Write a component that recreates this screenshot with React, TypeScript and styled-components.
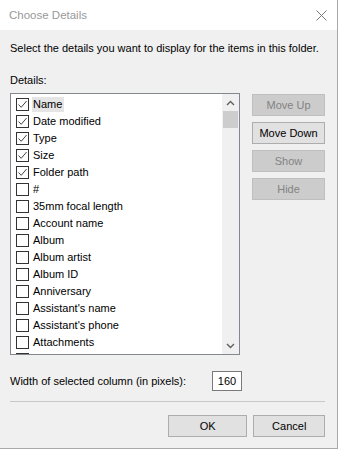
import React from 'react'
import styled, { createGlobalStyle } from 'styled-components'

const GlobalStyle = createGlobalStyle`
  html, body {
    margin: 0;
    padding: 0;
    background: #ffffff;
  }
  body {
    font-family: "Liberation Sans", Arial, sans-serif;
    font-size: 11px;
    color: #000;
  }
`

const Dialog = styled.div`
  width: 337px;
  height: 448px;
  border-right: 1px solid #a8a8a8;
  border-bottom: 1px solid #a8a8a8;
  background: #f0f0f0;
  display: flex;
  flex-direction: column;
`

const TitleBar = styled.div`
  height: 30px;
  background: #ffffff;
  display: flex;
  align-items: center;
  justify-content: space-between;
  padding: 0 10px 0 9px;
  font-size: 11.5px;
  color: #999999;
`

const Body = styled.div`
  flex: 1;
  display: flex;
  flex-direction: column;
  padding: 11px 12px 0 10px;
`

const Text = styled.div`
  line-height: 15px;
  white-space: nowrap;
`

const Intro = styled(Text)`
  margin-bottom: 17px;
`

const Caption = styled(Text)`
  margin-bottom: 5px;
`

const MainRow = styled.div`
  display: flex;
  gap: 12px;
  align-items: flex-start;
`

const ListBox = styled.div`
  width: 230px;
  height: 260px;
  border: 1px solid #828790;
  background: #ffffff;
  display: flex;
  overflow: hidden;
`

const Items = styled.div`
  flex: 1;
  display: flex;
  flex-direction: column;
  padding-top: 2px;
`

const Item = styled.div`
  height: 17px;
  display: flex;
  align-items: center;
  padding-left: 5px;
  flex-shrink: 0;
`

const Box = styled.div`
  width: 11px;
  height: 11px;
  border: 1px solid #333333;
  background: #ffffff;
  display: flex;
  align-items: center;
  justify-content: center;
  margin-right: 3px;
  flex-shrink: 0;
`

const Label = styled.span<{ $selected?: boolean }>`
  padding: 0 2px 0 1px;
  line-height: 15px;
  white-space: nowrap;
  background: ${({ $selected }) => ($selected ? '#e5e5e5' : 'transparent')};
`

const ScrollBar = styled.div`
  width: 17px;
  background: #f0f0f0;
  display: flex;
  flex-direction: column;
  align-items: center;
`

const Arrow = styled.div`
  height: 17px;
  width: 17px;
  display: flex;
  align-items: center;
  justify-content: center;
`

const Thumb = styled.div`
  width: 15px;
  height: 17px;
  background: #cdcdcd;
`

const Spacer = styled.div`
  flex: 1;
`

const ButtonColumn = styled.div`
  display: flex;
  flex-direction: column;
  gap: 6px;
  padding-top: 1px;
`

const Button = styled.div<{ $disabled?: boolean; $width?: number }>`
  width: ${({ $width }) => $width ?? 73}px;
  height: 22px;
  box-sizing: border-box;
  display: flex;
  align-items: center;
  justify-content: center;
  background: ${({ $disabled }) => ($disabled ? '#cccccc' : '#e1e1e1')};
  border: 1px solid ${({ $disabled }) => ($disabled ? '#bfbfbf' : '#adadad')};
  color: ${({ $disabled }) => ($disabled ? '#838383' : '#000000')};
`

const WidthRow = styled.div`
  display: flex;
  align-items: center;
  margin-top: 16px;
`

const WidthLabel = styled(Text)`
  width: 202px;
`

const NumberBox = styled.div`
  width: 30px;
  height: 20px;
  box-sizing: border-box;
  border: 1px solid #7a7a7a;
  background: #ffffff;
  display: flex;
  align-items: center;
  justify-content: center;
`

const Separator = styled.div`
  width: 315px;
  height: 1px;
  background: #c8c8c8;
  margin-top: 10px;
`

const Footer = styled.div`
  display: flex;
  gap: 6px;
  margin-top: 13px;
  padding-left: 158px;
`

const items: { name: string; checked: boolean }[] = [
  { name: 'Name', checked: true },
  { name: 'Date modified', checked: true },
  { name: 'Type', checked: true },
  { name: 'Size', checked: true },
  { name: 'Folder path', checked: true },
  { name: '#', checked: false },
  { name: '35mm focal length', checked: false },
  { name: 'Account name', checked: false },
  { name: 'Album', checked: false },
  { name: 'Album artist', checked: false },
  { name: 'Album ID', checked: false },
  { name: 'Anniversary', checked: false },
  { name: "Assistant's name", checked: false },
  { name: "Assistant's phone", checked: false },
  { name: 'Attachments', checked: false },
  { name: 'Attributes', checked: false },
]

const Check = () => (
  <svg width="11" height="11" viewBox="0 0 11 11">
    <path d="M1.5 5.5 L4.2 8.3 L9.6 2" fill="none" stroke="#444" strokeWidth="1" />
  </svg>
)

const Chevron = ({ down }: { down?: boolean }) => (
  <svg width="9" height="6" viewBox="0 0 9 6">
    <path
      d={down ? 'M1 1 L4.5 4.5 L8 1' : 'M1 5 L4.5 1.5 L8 5'}
      fill="none"
      stroke="#606060"
      strokeWidth="1.4"
    />
  </svg>
)

const Close = () => (
  <svg width="11" height="11" viewBox="0 0 11 11">
    <path d="M0.5 0.5 L10.5 10.5 M10.5 0.5 L0.5 10.5" stroke="#777" strokeWidth="1" />
  </svg>
)

const App = () => {
  return (
    <>
      <GlobalStyle />
      <Dialog>
        <TitleBar>
          <span>Choose Details</span>
          <Close />
        </TitleBar>
        <Body>
          <Intro>Select the details you want to display for the items in this folder.</Intro>
          <Caption>Details:</Caption>
          <MainRow>
            <ListBox>
              <Items>
                {items.map((item, i) => (
                  <Item key={item.name}>
                    <Box>{item.checked && <Check />}</Box>
                    <Label $selected={i === 0}>{item.name}</Label>
                  </Item>
                ))}
              </Items>
              <ScrollBar>
                <Arrow>
                  <Chevron />
                </Arrow>
                <Thumb />
                <Spacer />
                <Arrow>
                  <Chevron down />
                </Arrow>
              </ScrollBar>
            </ListBox>
            <ButtonColumn>
              <Button $disabled>Move Up</Button>
              <Button>Move Down</Button>
              <Button $disabled>Show</Button>
              <Button $disabled>Hide</Button>
            </ButtonColumn>
          </MainRow>
          <WidthRow>
            <WidthLabel>Width of selected column (in pixels):</WidthLabel>
            <NumberBox>160</NumberBox>
          </WidthRow>
          <Separator />
          <Footer>
            <Button $width={80}>OK</Button>
            <Button $width={72}>Cancel</Button>
          </Footer>
        </Body>
      </Dialog>
    </>
  )
}

export default App
